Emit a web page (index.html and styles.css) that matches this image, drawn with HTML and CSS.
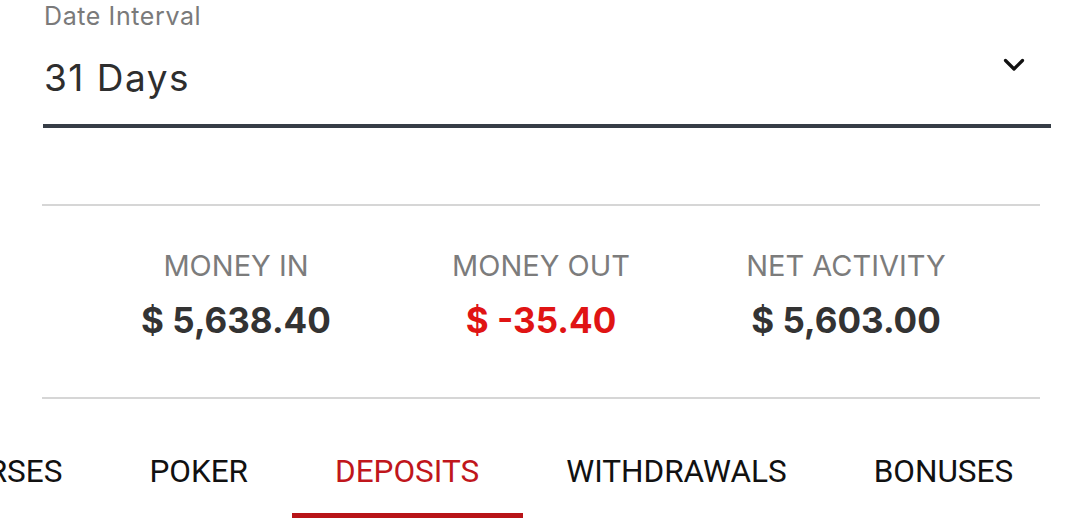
FILE: index.html
```html
<!DOCTYPE html>
<html>
<head>
<meta charset="utf-8">
<link rel="stylesheet" href="styles.css">
</head>
<body>
<div class="page">
  <div class="select">
    <div class="select-label">Date Interval</div>
    <div class="select-row">
      <span class="select-value">31 Days</span>
      <svg class="chev" width="24" height="16" viewBox="0 0 24 16"><path d="M3.5 3.5 L12 12 L20.5 3.5" fill="none" stroke="#111" stroke-width="3.2" stroke-linecap="round" stroke-linejoin="round"/></svg>
    </div>
  </div>
  <div class="stats">
    <div class="stat">
      <div class="stat-label">MONEY IN</div>
      <div class="stat-value">$ 5,638.40</div>
    </div>
    <div class="stat">
      <div class="stat-label">MONEY OUT</div>
      <div class="stat-value neg">$ -35.40</div>
    </div>
    <div class="stat">
      <div class="stat-label">NET ACTIVITY</div>
      <div class="stat-value">$ 5,603.00</div>
    </div>
  </div>
  <div class="tabs">
    <div class="tab first">HORSES</div>
    <div class="tab">POKER</div>
    <div class="tab active">DEPOSITS</div>
    <div class="tab">WITHDRAWALS</div>
    <div class="tab">BONUSES</div>
  </div>
</div>
</body>
</html>
```
FILE: styles.css
```css
html, body {
  margin: 0;
  padding: 0;
  background: #fff;
  overflow: hidden;
}
.page {
  width: 1080px;
  height: 532px;
  overflow: hidden;
  font-family: Inter, "Noto Sans", sans-serif;
}
.select {
  margin: 0 29px 0 43px;
  border-bottom: 4px solid #363d46;
  height: 124px;
}
.select-label {
  font-size: 25px;
  line-height: 32px;
  letter-spacing: 0.6px;
  color: #7a7a7a;
  padding-left: 1px;
}
.select-row {
  display: flex;
  justify-content: space-between;
  align-items: flex-start;
  margin-top: 26px;
}
.select-value {
  font-size: 37px;
  line-height: 40px;
  letter-spacing: 1.5px;
  color: #2e2e2e;
  padding-left: 1px;
}
.chev {
  margin-top: -1px;
  margin-right: 25px;
}
.stats {
  margin: 76px 40px 0 42px;
  border-top: 2px solid #d6d6d6;
  border-bottom: 2px solid #d6d6d6;
  height: 191px;
  display: flex;
  justify-content: center;
}
.stat {
  width: 305px;
  text-align: center;
  padding-top: 43px;
}
.stat-label {
  font-size: 29px;
  line-height: 34px;
  color: #7c7c7c;
}
.stat-value {
  font-size: 35px;
  font-weight: 700;
  line-height: 40px;
  color: #333;
  margin-top: 17px;
}
.stat-value.neg {
  color: #e01414;
}
.tabs {
  display: flex;
  margin-top: 44px;
  margin-left: -100px;
  font-family: Roboto, sans-serif;
}
.tab {
  padding: 11px 43.5px 23px;
  font-size: 31.5px;
  line-height: 36px;
  color: #111;
  white-space: nowrap;
  border-bottom: 5px solid transparent;
}
.tab.active {
  color: #c0161c;
  border-bottom-color: #b81418;
}
```
